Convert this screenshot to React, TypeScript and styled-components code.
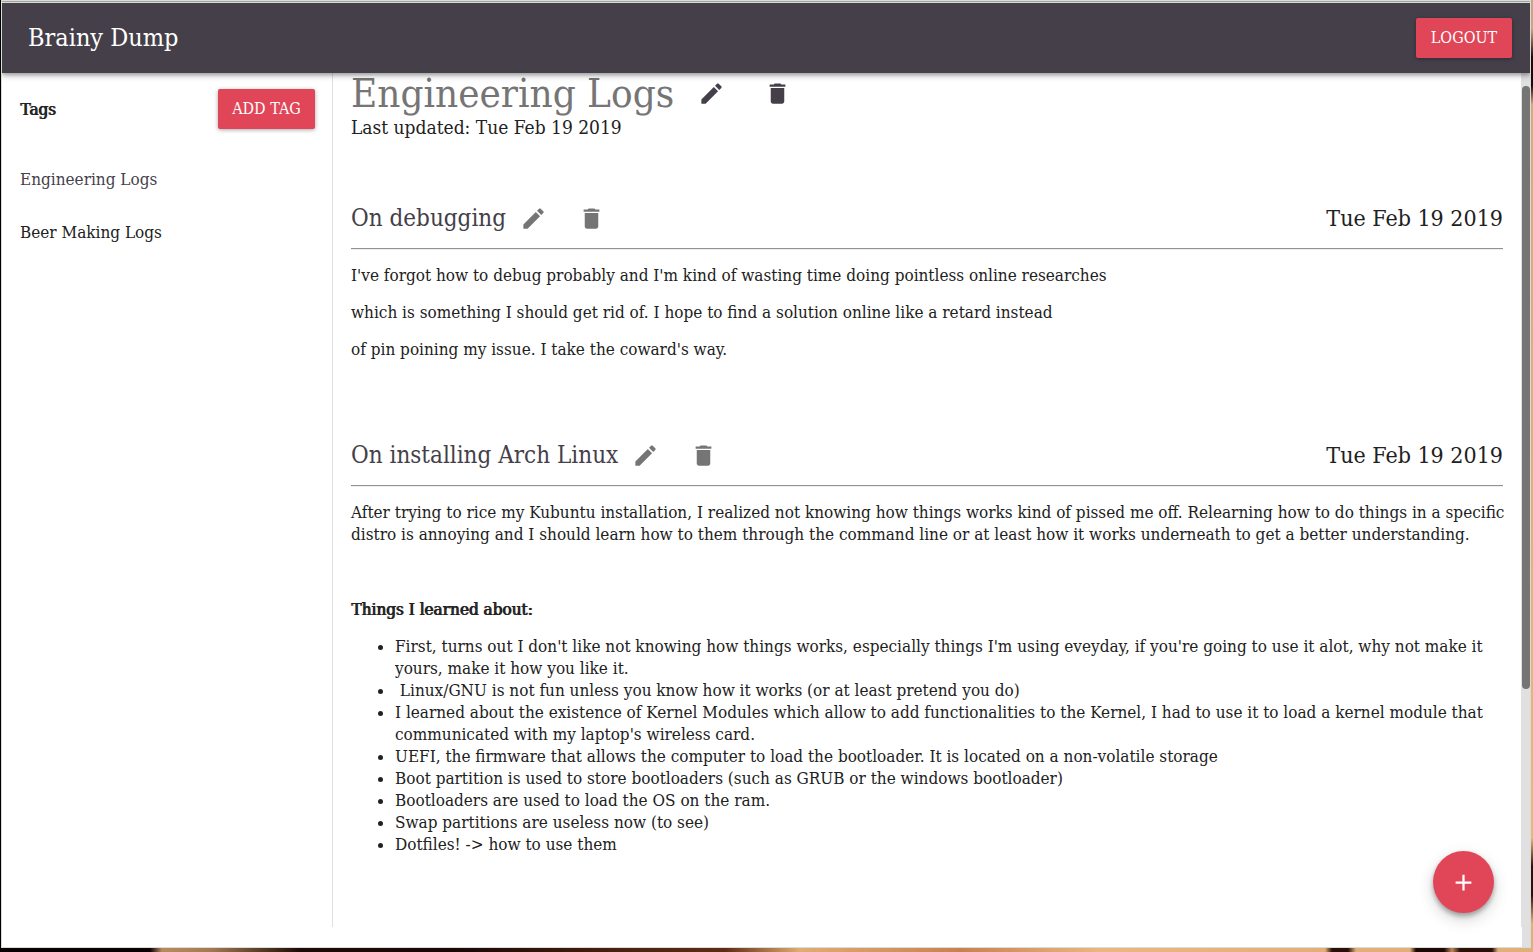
import React from 'react';
import styled, { createGlobalStyle } from 'styled-components';
import { MdAdd, MdDelete, MdEdit } from 'react-icons/md';

const color = {
  ink: '#453f4a',
  text: '#212121',
  grey: '#757575',
  red: '#e14658',
  line: '#e0e0e0',
};

const GlobalStyle = createGlobalStyle`
  *, *::before, *::after { box-sizing: border-box; }
  body {
    margin: 0;
    color: ${color.text};
    font-family: 'DejaVu Serif Condensed', 'DejaVu Serif', serif;
    font-size: 17px;
    line-height: 22px;
  }
  h1, h2, p, ul { margin: 0; font-weight: 400; }
`;

const Desktop = styled.div`
  display: flex;
  height: 100vh;
  padding: 0 2px 4px 1px;
  background:
    linear-gradient(90deg, #000 0 1px, transparent 1px),
    linear-gradient(180deg, #c9a582 0, #c9a582 3%, #1a0d08 6%, #1a0d08 9%, #d9a878 11%, #e8b878 88%, #2a1408 91%, #2a1408 94%, #e0b079 97%) right / 2px 100% no-repeat,
    linear-gradient(90deg, #0a0202 0 150px, #b98a60 162px, #a57a52 210px, #1c0b04 300px, #180703 450px, #4a2010 620px, #5e2c14 725px, #deae74 800px, #c98050 960px, #e8b880 1100px, #e0b078 1325px, #2a1008 1332px, #2a1008 1348px, #e0b078 1356px, #e0b078 1410px, #1c0804 1416px, #1c0804 1444px, #c08858 1452px, #2a1008 1460px, #2a1008 1492px, #e0b078 1498px);
`;

const Window = styled.div`
  display: flex;
  flex: 1;
  flex-direction: column;
  min-width: 0;
  border: 1px solid #d9dcd8;
  background: #fff;
  overflow: hidden;
`;

const WindowEdge = styled.div`
  flex: none;
  height: 2px;
  border-bottom: 1px solid #e6e6e0;
  background: #a3a69f;
`;

const TopBar = styled.header`
  z-index: 1;
  display: flex;
  flex: none;
  align-items: center;
  justify-content: space-between;
  height: 70px;
  padding: 0 18px 0 26px;
  background: ${color.ink};
  box-shadow: 0 2px 4px rgba(0, 0, 0, 0.3), 0 4px 6px rgba(0, 0, 0, 0.12);
`;

const Brand = styled.span`
  color: #fff;
  font-size: 25px;
  line-height: 32px;
`;

const RedButton = styled.button<{ $width: number }>`
  width: ${(p) => p.$width}px;
  height: 40px;
  padding: 0;
  border: 0;
  border-radius: 2px;
  background: ${color.red};
  box-shadow: 0 1px 4px rgba(0, 0, 0, 0.35);
  color: #fff;
  font: inherit;
  font-size: 16px;
  cursor: pointer;
`;

const Body = styled.div`
  display: flex;
  flex: 1;
  min-height: 0;
`;

const Sidebar = styled.nav`
  flex: none;
  width: 331px;
  margin-bottom: 20px;
  padding: 16px 17px 0 18px;
  border-right: 1px solid ${color.line};
`;

const SidebarHead = styled.div`
  display: flex;
  align-items: center;
  justify-content: space-between;
  margin-bottom: 39px;
`;

const Strong = styled.strong`
  font-weight: 400;
  text-shadow: 1px 0 currentColor;
`;

const TagList = styled.ul`
  display: flex;
  flex-direction: column;
  gap: 31px;
  padding: 0;
  list-style: none;
`;

const TagLink = styled.a<{ $active?: boolean }>`
  color: ${(p) => (p.$active ? color.ink : color.text)};
  text-decoration: none;
`;

const Main = styled.main`
  flex: 1;
  min-width: 0;
  margin-bottom: 20px;
  padding: 0 18px;
  border-right: 1px solid ${color.line};
`;

const ScrollTrack = styled.div`
  flex: none;
  width: 8px;
  padding-top: 13px;
  background: ${color.line};
`;

const ScrollThumb = styled.div`
  height: 70%;
  border-radius: 4px;
  background: ${color.grey};
`;

const TitleRow = styled.div`
  display: flex;
  align-items: center;
  height: 40px;
`;

const Title = styled.h1`
  margin-right: 24px;
  color: ${color.grey};
  font-size: 40px;
  line-height: 40px;
`;

const IconButton = styled.button<{ $tone: string }>`
  display: flex;
  margin: 0 39px 0 0;
  padding: 0;
  border: 0;
  background: none;
  color: ${(p) => p.$tone};
  font-size: 27px;
  cursor: pointer;
`;

const Updated = styled.p`
  margin-bottom: 61px;
  font-size: 19px;
  line-height: 28px;
`;

const Entry = styled.article`
  margin-bottom: 79px;
`;

const EntryHead = styled.header`
  display: flex;
  align-items: center;
  height: 32px;
`;

const EntryTitle = styled.h2`
  margin-right: 14px;
  color: ${color.ink};
  font-size: 24px;
  line-height: 32px;
`;

const EntryIcon = styled(IconButton)`
  margin-right: 31px;
`;

const EntryDate = styled.time`
  margin-left: auto;
  font-size: 23px;
  line-height: 32px;
`;

const Rule = styled.hr`
  margin: 14px 0;
  border: 0;
  border-top: 1px solid #929292;
  border-bottom: 1px solid #eee;
`;

const Prose = styled.div`
  display: flex;
  flex-direction: column;
  gap: 15px;
  margin-right: -6px;
`;

const Blank = styled.p`
  height: 23px;
`;

const Bullets = styled.ul`
  padding-left: 44px;
`;

const AddEntry = styled.button`
  position: fixed;
  right: 39px;
  bottom: 39px;
  z-index: 2;
  display: flex;
  align-items: center;
  justify-content: center;
  width: 61px;
  height: 62px;
  padding: 0;
  border: 0;
  border-radius: 50%;
  background: ${color.red};
  box-shadow: 0 3px 5px rgba(0, 0, 0, 0.3), 0 6px 16px rgba(0, 0, 0, 0.18);
  color: #fff;
  font-size: 27px;
  cursor: pointer;
`;

const learned = [
  "First, turns out I don't like not knowing how things works, especially things I'm using eveyday, if you're going to use it alot, why not make it yours, make it how you like it.",
  '\u00a0Linux/GNU is not fun unless you know how it works (or at least pretend you do)',
  "I learned about the existence of Kernel Modules which allow to add functionalities to the Kernel, I had to use it to load a kernel module that communicated with my laptop's wireless card.",
  'UEFI, the firmware that allows the computer to load the bootloader. It is located on a non-volatile storage',
  'Boot partition is used to store bootloaders (such as GRUB or the windows bootloader)',
  'Bootloaders are used to load the OS on the ram.',
  'Swap partitions are useless now (to see)',
  'Dotfiles! -> how to use them',
];

function LogEntry({ title, children }: { title: string; children: React.ReactNode }) {
  return (
    <Entry>
      <EntryHead>
        <EntryTitle>{title}</EntryTitle>
        <EntryIcon $tone={color.grey} aria-label={`Edit ${title}`}><MdEdit /></EntryIcon>
        <EntryIcon $tone={color.grey} aria-label={`Delete ${title}`}><MdDelete /></EntryIcon>
        <EntryDate dateTime="2019-02-19">Tue Feb 19 2019</EntryDate>
      </EntryHead>
      <Rule />
      <Prose>{children}</Prose>
    </Entry>
  );
}

export default function App() {
  return (
    <Desktop>
      <GlobalStyle />
      <Window>
        <WindowEdge />
        <TopBar>
          <Brand>Brainy Dump</Brand>
          <RedButton $width={96}>LOGOUT</RedButton>
        </TopBar>
        <Body>
          <Sidebar aria-label="Tags">
            <SidebarHead>
              <Strong>Tags</Strong>
              <RedButton $width={97}>ADD TAG</RedButton>
            </SidebarHead>
            <TagList>
              <li><TagLink href="#engineering" $active>Engineering Logs</TagLink></li>
              <li><TagLink href="#beer">Beer Making Logs</TagLink></li>
            </TagList>
          </Sidebar>
          <Main>
            <TitleRow>
              <Title>Engineering Logs</Title>
              <IconButton $tone={color.ink} aria-label="Edit tag"><MdEdit /></IconButton>
              <IconButton $tone={color.ink} aria-label="Delete tag"><MdDelete /></IconButton>
            </TitleRow>
            <Updated>Last updated: Tue Feb 19 2019</Updated>
            <LogEntry title="On debugging">
              <p>I've forgot how to debug probably and I'm kind of wasting time doing pointless online researches</p>
              <p>which is something I should get rid of. I hope to find a solution online like a retard instead</p>
              <p>of pin poining my issue. I take the coward's way.</p>
            </LogEntry>
            <LogEntry title="On installing Arch Linux">
              <p>After trying to rice my Kubuntu installation, I realized not knowing how things works kind of pissed me off. Relearning how to do things in a specific distro is annoying and I should learn how to them through the command line or at least how it works underneath to get a better understanding.</p>
              <Blank />
              <p><Strong>Things I learned about:</Strong></p>
              <Bullets>
                {learned.map((item) => <li key={item}>{item}</li>)}
              </Bullets>
            </LogEntry>
          </Main>
          <ScrollTrack><ScrollThumb /></ScrollTrack>
        </Body>
      </Window>
      <AddEntry aria-label="Add entry"><MdAdd /></AddEntry>
    </Desktop>
  );
}
